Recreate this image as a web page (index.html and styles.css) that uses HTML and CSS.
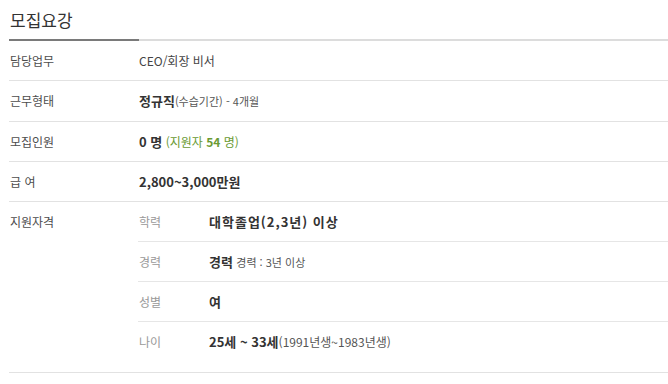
FILE: index.html
```html
<!DOCTYPE html>
<html lang="ko">
<head>
<meta charset="utf-8">
<title>모집요강</title>
<link rel="stylesheet" href="styles.css">
</head>
<body>
<section class="recruit">
  <h2 class="title">모집요강</h2>
  <div class="rule"><span class="rule-dark"></span><span class="rule-light"></span></div>
  <div class="row">
    <div class="label">담당업무</div>
    <div class="value">CEO/회장 비서</div>
  </div>
  <div class="row">
    <div class="label">근무형태</div>
    <div class="value"><b>정규직</b><span class="small">(수습기간) - 4개월</span></div>
  </div>
  <div class="row">
    <div class="label">모집인원</div>
    <div class="value"><b>0 명</b> <span class="green">(지원자 <b>54</b> 명)</span></div>
  </div>
  <div class="row">
    <div class="label">급 여</div>
    <div class="value"><b>2,800~3,000만원</b></div>
  </div>
  <div class="row row-quals">
    <div class="label">지원자격</div>
    <div class="quals">
      <div class="qrow"><div class="qlabel">학력</div><div class="qvalue"><b class="wide">대학졸업(2,3년) 이상</b></div></div>
      <div class="qrow"><div class="qlabel">경력</div><div class="qvalue"><b>경력</b> <span class="small">경력 : 3년 이상</span></div></div>
      <div class="qrow"><div class="qlabel">성별</div><div class="qvalue"><b>여</b></div></div>
      <div class="qrow"><div class="qlabel">나이</div><div class="qvalue"><b>25세 ~ 33세</b><span class="mid">(1991년생~1983년생)</span></div></div>
    </div>
  </div>
</section>
</body>
</html>
```
FILE: styles.css
```css
html, body {
  margin: 0;
  padding: 0;
  background: #fff;
}
body {
  font-family: "Noto Sans CJK KR", "Noto Sans", sans-serif;
  color: #333;
  font-size: 12px;
}
.recruit {
  margin-left: 9px;
}
.title {
  margin: 0;
  padding: 8px 0 0 1px;
  height: 31px;
  font-size: 17px;
  line-height: 24px;
  font-weight: normal;
  color: #333;
}
.rule {
  display: flex;
  height: 2px;
}
.rule-dark {
  width: 130px;
  background: #7a7a7a;
}
.rule-light {
  flex: 1;
  background: #dcdcdc;
}
.row {
  display: flex;
  border-bottom: 1px solid #e2e2e2;
}
.label {
  width: 128px;
  padding-left: 1px;
  height: 39px;
  line-height: 39px;
  color: #4d4d4d;
  flex: none;
}
.value {
  flex: 1;
  padding-left: 1px;
  line-height: 39px;
  color: #444;
}
.value b, .qvalue b {
  font-size: 13px;
  color: #333;
}
.qvalue b.wide {
  letter-spacing: 1px;
}
.small {
  font-size: 11px;
  color: #555;
}
.mid {
  font-size: 12px;
  color: #555;
}
.green {
  color: #6a9a33;
  font-size: 12px;
}
.green b {
  color: #6a9a33;
  font-size: 12px;
}
.quals {
  flex: 1;
  padding-bottom: 10px;
}
.qrow {
  display: flex;
  height: 39px;
  line-height: 39px;
  border-bottom: 1px solid #e6e6e6;
}
.qrow:last-child {
  border-bottom: 0;
  height: 40px;
}
.qlabel {
  width: 70px;
  padding-left: 1px;
  color: #999;
  flex: none;
}
.qvalue {
  flex: 1;
  color: #444;
}
```
